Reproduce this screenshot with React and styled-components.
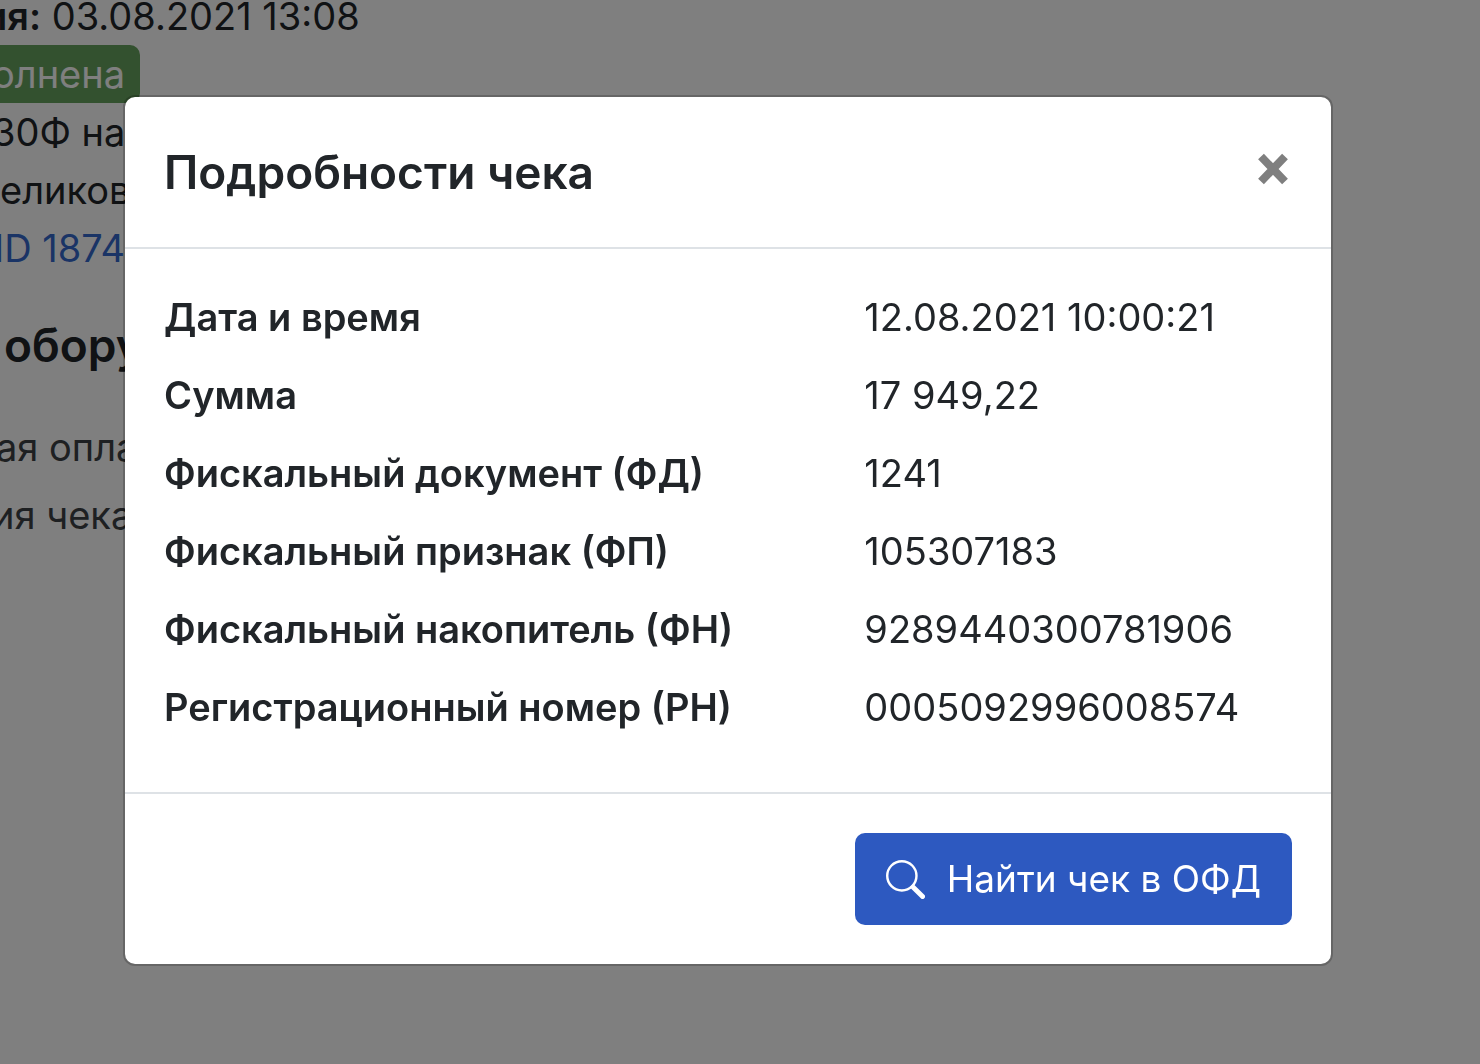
import React from "react";
import styled, { createGlobalStyle } from "styled-components";

const GlobalStyle = createGlobalStyle`
  *, *::before, *::after { box-sizing: border-box; }
  body {
    margin: 0;
    overflow: hidden;
    background: #fff;
    color: #212529;
    font-family: Inter, "Liberation Sans", sans-serif;
    font-size: 38px;
    line-height: 58px;
  }
`;

const Page = styled.main`
  min-height: 100vh;
  margin-top: -13px;
  margin-left: -16px;
  white-space: nowrap;
`;

const Line = styled.div`
  padding-left: ${(p) => p.$inset || 0}px;
`;

const Term = styled.b`
  font-weight: 600;
`;

const Status = styled.span`
  display: block;
  width: fit-content;
  padding: 0 15px 0 8px;
  border-radius: 0 10px 10px 0;
  background: #66a25e;
  color: #fff;
`;

const OrderLink = styled.a`
  color: #3569cc;
  text-decoration: none;
`;

const SectionTitle = styled.h2`
  margin: 39px 0 44px;
  padding-left: 20px;
  font-size: 46px;
  line-height: 58px;
  font-weight: 600;
`;

const OrderItem = styled.p`
  margin: 0 0 10px;
  padding-left: ${(p) => p.$inset || 0}px;
  color: #3d4144;
`;

const Backdrop = styled.div`
  position: fixed;
  inset: 0;
  display: flex;
  justify-content: center;
  align-items: flex-start;
  padding: 95px 24px 24px 0;
  overflow: auto;
  background: rgba(0, 0, 0, 0.5);
`;

const Dialog = styled.section`
  width: 100%;
  max-width: 1210px;
  border: 2px solid rgba(0, 0, 0, 0.2);
  border-radius: 12px;
  background: #fff;
  background-clip: padding-box;
`;

const DialogHeader = styled.header`
  display: flex;
  align-items: flex-start;
  justify-content: space-between;
  padding: 39px;
  border-bottom: 2px solid #dee2e6;
`;

const DialogTitle = styled.h1`
  margin: 0;
  font-size: 46px;
  line-height: 72px;
  font-weight: 600;
`;

const CloseButton = styled.button`
  display: grid;
  place-items: center;
  width: 38px;
  height: 66px;
  padding: 0;
  border: 0;
  background: none;
  color: #7f7f7f;
  cursor: pointer;
`;

const DialogBody = styled.div`
  padding: 39px 39px 36px;
`;

const Details = styled.table`
  width: 100%;
  border-collapse: collapse;
  table-layout: fixed;
`;

const Name = styled.th`
  width: 62%;
  padding: 0 0 20px;
  text-align: left;
  font-weight: 600;
`;

const Value = styled.td`
  padding: 0 0 20px 1px;
`;

const DialogFooter = styled.footer`
  display: flex;
  justify-content: flex-end;
  padding: 39px;
  border-top: 2px solid #dee2e6;
`;

const PrimaryButton = styled.button`
  display: flex;
  align-items: center;
  gap: 22px;
  padding: 17px 31px;
  border: 0;
  border-radius: 10px;
  background: #2d59c0;
  color: #fff;
  font-family: inherit;
  font-size: 37px;
  line-height: 58px;
  cursor: pointer;
`;

const details = [
  ["Дата и время", "12.08.2021 10:00:21"],
  ["Сумма", "17 949,22"],
  ["Фискальный документ (ФД)", "1241"],
  ["Фискальный признак (ФП)", "105307183"],
  ["Фискальный накопитель (ФН)", "9289440300781906"],
  ["Регистрационный номер (РН)", "0005092996008574"],
];

const CloseIcon = () => (
  <svg width="30" height="32" viewBox="0 0 30 32" fill="none" stroke="currentColor" strokeWidth="8" aria-hidden="true">
    <path d="M3 3.5l24 25M27 3.5l-24 25" />
  </svg>
);

const SearchIcon = () => (
  <svg width="39" height="39" viewBox="0 0 16 16" fill="currentColor" aria-hidden="true">
    <path fillRule="evenodd" d="M10.442 10.442a1 1 0 011.415 0l3.85 3.85a1 1 0 01-1.414 1.415l-3.85-3.85a1 1 0 010-1.415z" />
    <path fillRule="evenodd" d="M6.5 12a5.5 5.5 0 100-11 5.5 5.5 0 000 11zM13 6.5a6.5 6.5 0 11-13 0 6.5 6.5 0 0113 0z" />
  </svg>
);

export default function App() {
  return (
    <>
      <GlobalStyle />
      <Page>
        <Line><Term>ия:</Term> 03.08.2021 13:08</Line>
        <Status>олнена</Status>
        <Line $inset={8}>30Ф на</Line>
        <Line $inset={16}>еликов</Line>
        <Line $inset={10}><OrderLink href="#order">ID 1874</OrderLink></Line>
        <SectionTitle>обору</SectionTitle>
        <OrderItem $inset={12}>ая опла</OrderItem>
        <OrderItem $inset={8}>ия чека</OrderItem>
      </Page>
      <Backdrop>
        <Dialog role="dialog" aria-modal="true" aria-labelledby="receipt-title">
          <DialogHeader>
            <DialogTitle id="receipt-title">Подробности чека</DialogTitle>
            <CloseButton type="button" aria-label="Закрыть"><CloseIcon /></CloseButton>
          </DialogHeader>
          <DialogBody>
            <Details>
              <tbody>
                {details.map(([name, value]) => (
                  <tr key={name}>
                    <Name scope="row">{name}</Name>
                    <Value>{value}</Value>
                  </tr>
                ))}
              </tbody>
            </Details>
          </DialogBody>
          <DialogFooter>
            <PrimaryButton type="button"><SearchIcon />Найти чек в ОФД</PrimaryButton>
          </DialogFooter>
        </Dialog>
      </Backdrop>
    </>
  );
}
